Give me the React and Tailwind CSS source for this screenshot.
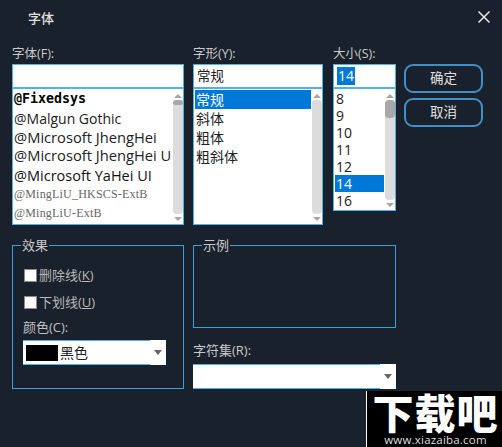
const CJK = "font-['Open_Sans','Noto_Sans_CJK_SC',sans-serif]";

function Scrollbar({ thumb }) {
  return (
    <div className="flex w-[11px] flex-col items-center pt-[5px] pb-[3px]">
      <div className="h-0 w-0 border-x-[4px] border-b-[4px] border-x-transparent border-b-[#a6a6a6]" />
      <div className="mt-[2px] w-[10px] flex-1 rounded-[4px] bg-[#dcdcdc]">
        <div className={`${thumb} w-[10px] rounded-[4px] bg-[#a8a8a8]`} />
      </div>
      <div className="mt-[3px] h-0 w-0 border-x-[4px] border-t-[4px] border-x-transparent border-t-[#a6a6a6]" />
    </div>
  );
}

function Field({ children }) {
  return (
    <div className="flex h-[24px] items-center border border-[#4fb3e8] bg-white px-[3px] text-[13.5px] text-[#222]">
      {children}
    </div>
  );
}

function Label({ children }) {
  return <div className="h-[19px] text-[12.5px] leading-[18px] text-[#c9c9c9]">{children}</div>;
}

function Check({ label, k }) {
  return (
    <div className="flex h-[27px] items-center text-[13px] text-[#b9b9b9]">
      <span className="mr-[2px] h-[13px] w-[13px] border border-[#8a8a8a] bg-white" />
      {label}(<span className="underline">{k}</span>)
    </div>
  );
}

function Group({ title, className, children }) {
  return (
    <div className={`relative border border-[#3f9fd8] ${className}`}>
      <span className="absolute left-[8px] top-[-9px] bg-[#19212c] px-[1px] text-[13px] leading-[16px] text-[#c9c9c9]">
        {title}
      </span>
      {children}
    </div>
  );
}

function Combo({ children, className }) {
  return (
    <div className={`flex h-[25px] bg-white ${className}`}>
      <div className="flex flex-1 items-center border-y border-[#4fb3e8] pl-[3px]">{children}</div>
      <div className="flex w-[16px] items-center justify-center">
        <div className="h-0 w-0 border-x-[4px] border-t-[5px] border-x-transparent border-t-[#666]" />
      </div>
    </div>
  );
}

export default function App() {
  const sizes = ["8", "9", "10", "11", "12", "14", "16"];
  return (
    <div className={`relative h-[447px] w-[502px] overflow-hidden bg-[#19212c] ${CJK}`}>
      <div className="flex h-[45px] items-start justify-between pl-[28px] pr-[12px] pt-[9px]">
        <span className="text-[13px] font-medium leading-[18px] text-[#e0e0e0]">字体</span>
        <svg width="14" height="14" viewBox="0 0 14 14" className="mt-[1px] mr-[-1px] text-[#e8e8e8]">
          <path d="M1.5 1.5 L12.5 12.5 M12.5 1.5 L1.5 12.5" stroke="currentColor" strokeWidth="1.5" fill="none" />
        </svg>
      </div>

      <div className="flex pl-[12px]">
        <div className="w-[172px]">
          <Label>字体(F):</Label>
          <Field />
          <div className="flex h-[137px] border border-[#4fb3e8] bg-white">
            <div className="flex-1 overflow-hidden pl-[1px] text-[#222]">
              <div className="h-[20px] font-['DejaVu_Sans_Mono'] text-[13.3px] font-bold leading-[20px] text-black">@Fixedsys</div>
              <div className="h-[19px] text-[14px] leading-[19px]">@Malgun Gothic</div>
              <div className="h-[18px] text-[14.7px] leading-[18px]">@Microsoft JhengHei</div>
              <div className="h-[20px] whitespace-nowrap text-[14.7px] leading-[19px]">@Microsoft JhengHei U</div>
              <div className="h-[19px] text-[14.5px] leading-[20px] text-[#111]">@Microsoft YaHei UI</div>
              <div className="h-[19px] font-['Liberation_Serif'] text-[12px] leading-[18px] tracking-[0.2px] text-[#666]">@MingLiU_HKSCS-ExtB</div>
              <div className="h-[19px] font-['Liberation_Serif'] text-[12px] leading-[19px] tracking-[0.2px] text-[#666]">@MingLiU-ExtB</div>
            </div>
            <Scrollbar thumb="h-[5px]" />
          </div>
        </div>

        <div className="ml-[9px] w-[130px]">
          <Label>字形(Y):</Label>
          <Field>常规</Field>
          <div className="flex h-[137px] border border-[#4fb3e8] bg-white">
            <div className="flex-1 pl-[1px] pt-[1px] text-[14px] leading-[19px] text-[#222]">
              <div className="h-[19px] bg-[#0078d7] pl-[1px] text-white">常规</div>
              <div className="h-[19px] pl-[1px]">斜体</div>
              <div className="h-[19px] pl-[1px]">粗体</div>
              <div className="h-[19px] pl-[1px]">粗斜体</div>
            </div>
            <Scrollbar thumb="h-0" />
          </div>
        </div>

        <div className="ml-[10px] w-[63px]">
          <Label>大小(S):</Label>
          <Field>
            <span className="bg-[#0078d7] px-[1px] text-[14px] leading-[18px] text-white">14</span>
          </Field>
          <div className="flex h-[123px] border border-[#4fb3e8] bg-white">
            <div className="flex-1 pl-[1px] pt-[1px] text-[14px] leading-[17px] text-[#222]">
              {sizes.map((s) => (
                <div key={s} className={`h-[17px] pl-[1px] ${s === "14" ? "bg-[#0078d7] text-white" : ""}`}>
                  {s}
                </div>
              ))}
            </div>
            <Scrollbar thumb="h-[18px]" />
          </div>
        </div>

        <div className="ml-[8px] flex w-[79px] flex-col gap-[5px] pt-[19px]">
          <button className="h-[29px] rounded-[9px] border-2 border-[#3f8fc8] text-[13.5px] text-[#e0e0e0]">确定</button>
          <button className="h-[29px] rounded-[9px] border-2 border-[#3f8fc8] text-[13.5px] text-[#e0e0e0]">取消</button>
        </div>
      </div>

      <div className="mt-[20px] flex pl-[12px]">
        <Group title="效果" className="h-[144px] w-[172px] pl-[10px] pt-[16px]">
          <div className="pl-[1px]">
            <Check label="删除线" k="K" />
            <Check label="下划线" k="U" />
          </div>
          <div className="mt-[2px] h-[22px] text-[13px] leading-[18px] text-[#c0c0c0]">颜色(C):</div>
          <Combo className="mr-[17px]">
            <span className="mr-[2px] h-[16px] w-[32px] bg-black" />
            <span className="text-[14px] text-[#222]">黑色</span>
          </Combo>
        </Group>

        <div className="ml-[9px] w-[203px]">
          <Group title="示例" className="h-[83px]" />
          <div className="mt-[13px] h-[23px] text-[13px] leading-[18px] text-[#c9c9c9]">字符集(R):</div>
          <Combo />
        </div>
      </div>

      <div className="absolute bottom-0 right-0 flex h-[56px] w-[136px] flex-col items-center border-l border-white bg-black pl-[2px] text-white">
        <div className="h-[41px] font-['Noto_Sans_CJK_SC'] text-[41px] font-black leading-[41px] tracking-[1px]">下载吧</div>
        <div className="mt-[1px] font-['Open_Sans'] text-[11.5px] leading-[14px] tracking-[0.2px] text-[#ddd]">www.xiazaiba.com</div>
      </div>
    </div>
  );
}
